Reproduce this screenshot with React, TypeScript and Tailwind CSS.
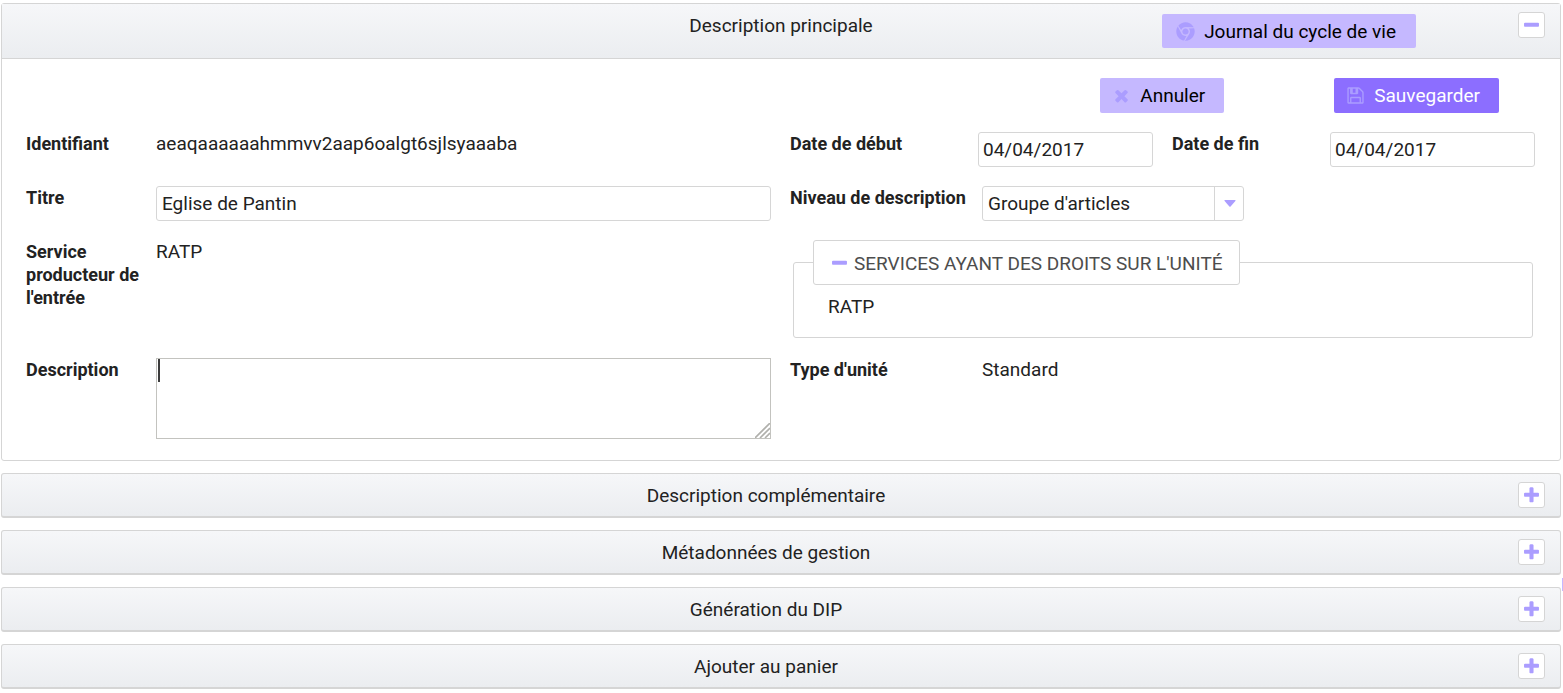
import { useState } from 'react';
import type { ReactNode } from 'react';
import { FaChrome } from 'react-icons/fa';

const ICONS = {
  plus: 'M1600 736v192q0 40-28 68t-68 28h-416v416q0 40-28 68t-68 28h-192q-40 0-68-28t-28-68v-416h-416q-40 0-68-28t-28-68v-192q0-40 28-68t68-28h416v-416q0-40 28-68t68-28h192q40 0 68 28t28 68v416h416q40 0 68 28t28 68z',
  minus: 'M1600 736v192q0 40-28 68t-68 28h-1216q-40 0-68-28t-28-68v-192q0-40 28-68t68-28h1216q40 0 68 28t28 68z',
  times: 'M1490 1322q0 40-28 68l-136 136q-28 28-68 28t-68-28l-294-294-294 294q-28 28-68 28t-68-28l-136-136q-28-28-28-68t28-68l294-294-294-294q-28-28-28-68t28-68l136-136q28-28 68-28t68 28l294 294 294-294q28-28 68-28t68 28l136 136q28 28 28 68t-28 68l-294 294 294 294q28 28 28 68z',
  save: 'M512 1536h768v-384h-768v384zm896 0h128v-896q0-14-10-38.5t-20-34.5l-281-281q-10-10-34-20t-39-10v416q0 40-28 68t-68 28h-576q-40 0-68-28t-28-68v-416h-128v1280h128v-416q0-40 28-68t68-28h832q40 0 68 28t28 68v416zm-512-928v-320q0-13-9.5-22.5t-22.5-9.5h-192q-13 0-22.5 9.5t-9.5 22.5v320q0 13 9.5 22.5t22.5 9.5h192q13 0 22.5-9.5t9.5-22.5zm768 32v928q0 40-28 68t-68 28h-1344q-40 0-68-28t-28-68v-1344q0-40 28-68t68-28h928q40 0 88 20t76 48l280 280q28 28 48 76t20 88z',
};

const Icon = ({ name }: { name: keyof typeof ICONS }) => (
  <svg viewBox="0 0 1792 1792" className="size-[19px] shrink-0 fill-[#ab9dff]" aria-hidden="true">
    <path d={ICONS[name]} />
  </svg>
);

const fieldClass = 'h-[35px] rounded-[3px] border border-[#d6d6d6] bg-white outline-none';
const labelClass = 'text-[18px] font-bold';

const ToggleButton = ({ open, label, onClick }: { open: boolean; label: string; onClick?: () => void }) => (
  <button
    type="button"
    aria-label={label}
    aria-expanded={open}
    onClick={onClick}
    className="flex h-[26px] w-[27px] shrink-0 items-center justify-center rounded-[3px] border border-[#d5d5d5] bg-white"
  >
    <Icon name={open ? 'minus' : 'plus'} />
  </button>
);

const Row = ({ children }: { children: ReactNode }) => (
  <div className="grid grid-cols-2 gap-[19px]">{children}</div>
);

const ClosedPanel = ({ title }: { title: string }) => {
  const [open, setOpen] = useState(false);

  return (
    <section>
      <header className="flex h-[45px] items-center rounded-[3px] border border-b-2 border-[#d5d5d5] bg-linear-to-b from-[#f6f7f9] to-[#ebedf0] pr-[15px] pl-3">
        <h2 className="flex-1 text-center">{title}</h2>
        <ToggleButton open={open} label={title} onClick={() => setOpen(!open)} />
      </header>
    </section>
  );
};

const MainPanel = () => {
  const [title, setTitle] = useState('Eglise de Pantin');
  const [start, setStart] = useState('04/04/2017');
  const [end, setEnd] = useState('04/04/2017');
  const [description, setDescription] = useState('');

  return (
    <section className="rounded-[3px] border border-[#d5d5d5]">
      <header className="grid grid-cols-[1fr_auto_1fr] items-start border-b border-[#d5d5d5] bg-linear-to-b from-[#f6f7f9] to-[#ebedf0] px-[15px] pt-2 pb-[10px]">
        <h2 className="col-start-2 pt-[2px]">Description principale</h2>
        <div className="flex items-start justify-end gap-[102px]">
          <button type="button" className="mt-[2px] flex h-[34px] items-center gap-[9px] rounded-[2px] bg-[#c5b8ff] pr-5 pl-[14px] text-black">
            <FaChrome className="size-[19px] text-[#ab9dff]" />
            Journal du cycle de vie
          </button>
          <ToggleButton open label="Description principale" />
        </div>
      </header>

      <form className="flex flex-col gap-[19px] pt-[19px] pr-[25px] pb-[21px] pl-6" onSubmit={(e) => e.preventDefault()}>
        <div className="flex justify-end gap-[110px] pr-9">
          <button type="button" className="flex h-[35px] items-center gap-[9px] rounded-[2px] bg-[#c5b8ff] pr-[19px] pl-3 text-black">
            <Icon name="times" />
            Annuler
          </button>
          <button type="submit" className="flex h-[35px] items-center gap-[9px] rounded-[2px] bg-[#8c6eff] pr-[19px] pl-3 text-white">
            <Icon name="save" />
            Sauvegarder
          </button>
        </div>

        <Row>
          <div className="grid grid-cols-[130px_1fr]">
            <span className={labelClass}>Identifiant</span>
            <span>aeaqaaaaaahmmvv2aap6oalgt6sjlsyaaaba</span>
          </div>
          <div className="grid grid-cols-[188px_175fr_177fr_205fr]">
            <label htmlFor="start" className={labelClass}>Date de début</label>
            <input id="start" value={start} onChange={(e) => setStart(e.target.value)} className={`w-full min-w-0 px-1 ${fieldClass}`} />
            <label htmlFor="end" className={`pl-[19px] ${labelClass}`}>Date de fin</label>
            <input id="end" value={end} onChange={(e) => setEnd(e.target.value)} className={`w-full min-w-0 px-1 ${fieldClass}`} />
          </div>
        </Row>

        <Row>
          <div className="grid grid-cols-[130px_1fr]">
            <label htmlFor="title" className={labelClass}>Titre</label>
            <input id="title" value={title} onChange={(e) => setTitle(e.target.value)} className={`w-full px-[5px] ${fieldClass}`} />
          </div>
          <div className="grid grid-cols-[192px_1fr]">
            <label htmlFor="level" className={labelClass}>Niveau de description</label>
            <div className="relative w-[262px]">
              <select id="level" defaultValue="Groupe d'articles" className={`w-full appearance-none pr-9 pl-[5px] ${fieldClass}`}>
                <option>Groupe d'articles</option>
                <option>Article</option>
                <option>Dossier</option>
              </select>
              <span className="pointer-events-none absolute inset-y-0 right-0 flex w-[30px] items-center justify-center border-l border-[#d6d6d6]">
                <svg viewBox="0 0 12 7" className="h-[7px] w-3 fill-[#ab9dff]" aria-hidden="true">
                  <path d="M1 0h10q1 0 .4 1L6.6 6.4q-.6.6-1.2 0L.6 1Q0 0 1 0z" />
                </svg>
              </span>
            </div>
          </div>
        </Row>

        <Row>
          <div className="grid grid-cols-[130px_1fr]">
            <span className={labelClass}>Service producteur de l'entrée</span>
            <span>RATP</span>
          </div>
          <fieldset className="mr-[2px] mb-px ml-[3px] min-w-0 rounded-[3px] border border-[#d5d5d5] px-[19px] pb-[19px]">
            <legend className="rounded-[3px] border border-[#d5d5d5] bg-white">
              <button type="button" aria-expanded="true" className="flex h-[43px] items-center gap-[5px] px-4 pt-[2px] text-[#4d4d4d]">
                <Icon name="minus" />
                SERVICES AYANT DES DROITS SUR L'UNITÉ
              </button>
            </legend>
            <p className="pt-[10px] pl-[15px]">RATP</p>
          </fieldset>
        </Row>

        <Row>
          <div className="grid grid-cols-[130px_1fr]">
            <label htmlFor="description" className={labelClass}>Description</label>
            <div className="relative flex">
              <textarea
                id="description"
                value={description}
                onChange={(e) => setDescription(e.target.value)}
                className="h-[81px] w-full resize-none border border-[#c3c3bf] px-1 outline-none"
              />
              {description === '' && <span className="pointer-events-none absolute top-px left-[2px] h-[23px] w-[2px] bg-[#3c3c3c]" />}
              <svg viewBox="0 0 15 15" className="pointer-events-none absolute right-px bottom-px size-[15px] stroke-[#b0b0ac]" aria-hidden="true">
                <path d="M0 15 15 0M5 15 15 5M10 15l5-5" strokeWidth="1.6" />
              </svg>
            </div>
          </div>
          <div className="grid grid-cols-[192px_1fr]">
            <span className={labelClass}>Type d'unité</span>
            <span>Standard</span>
          </div>
        </Row>
      </form>
    </section>
  );
};

const App = () => (
  <main className="relative flex flex-col gap-3 overflow-hidden bg-white pt-[3px] pr-[2px] pb-1 pl-px font-[Roboto,'Liberation_Sans',sans-serif] text-[19px] leading-[23px] text-[#222]">
    <MainPanel />
    <ClosedPanel title="Description complémentaire" />
    <ClosedPanel title="Métadonnées de gestion" />
    <ClosedPanel title="Génération du DIP" />
    <ClosedPanel title="Ajouter au panier" />
    {/* edge of the collapsed side drawer */}
    <div className="absolute top-[578px] right-0 h-[13px] w-px bg-[#c5b8ff]" />
  </main>
);

export default App;
